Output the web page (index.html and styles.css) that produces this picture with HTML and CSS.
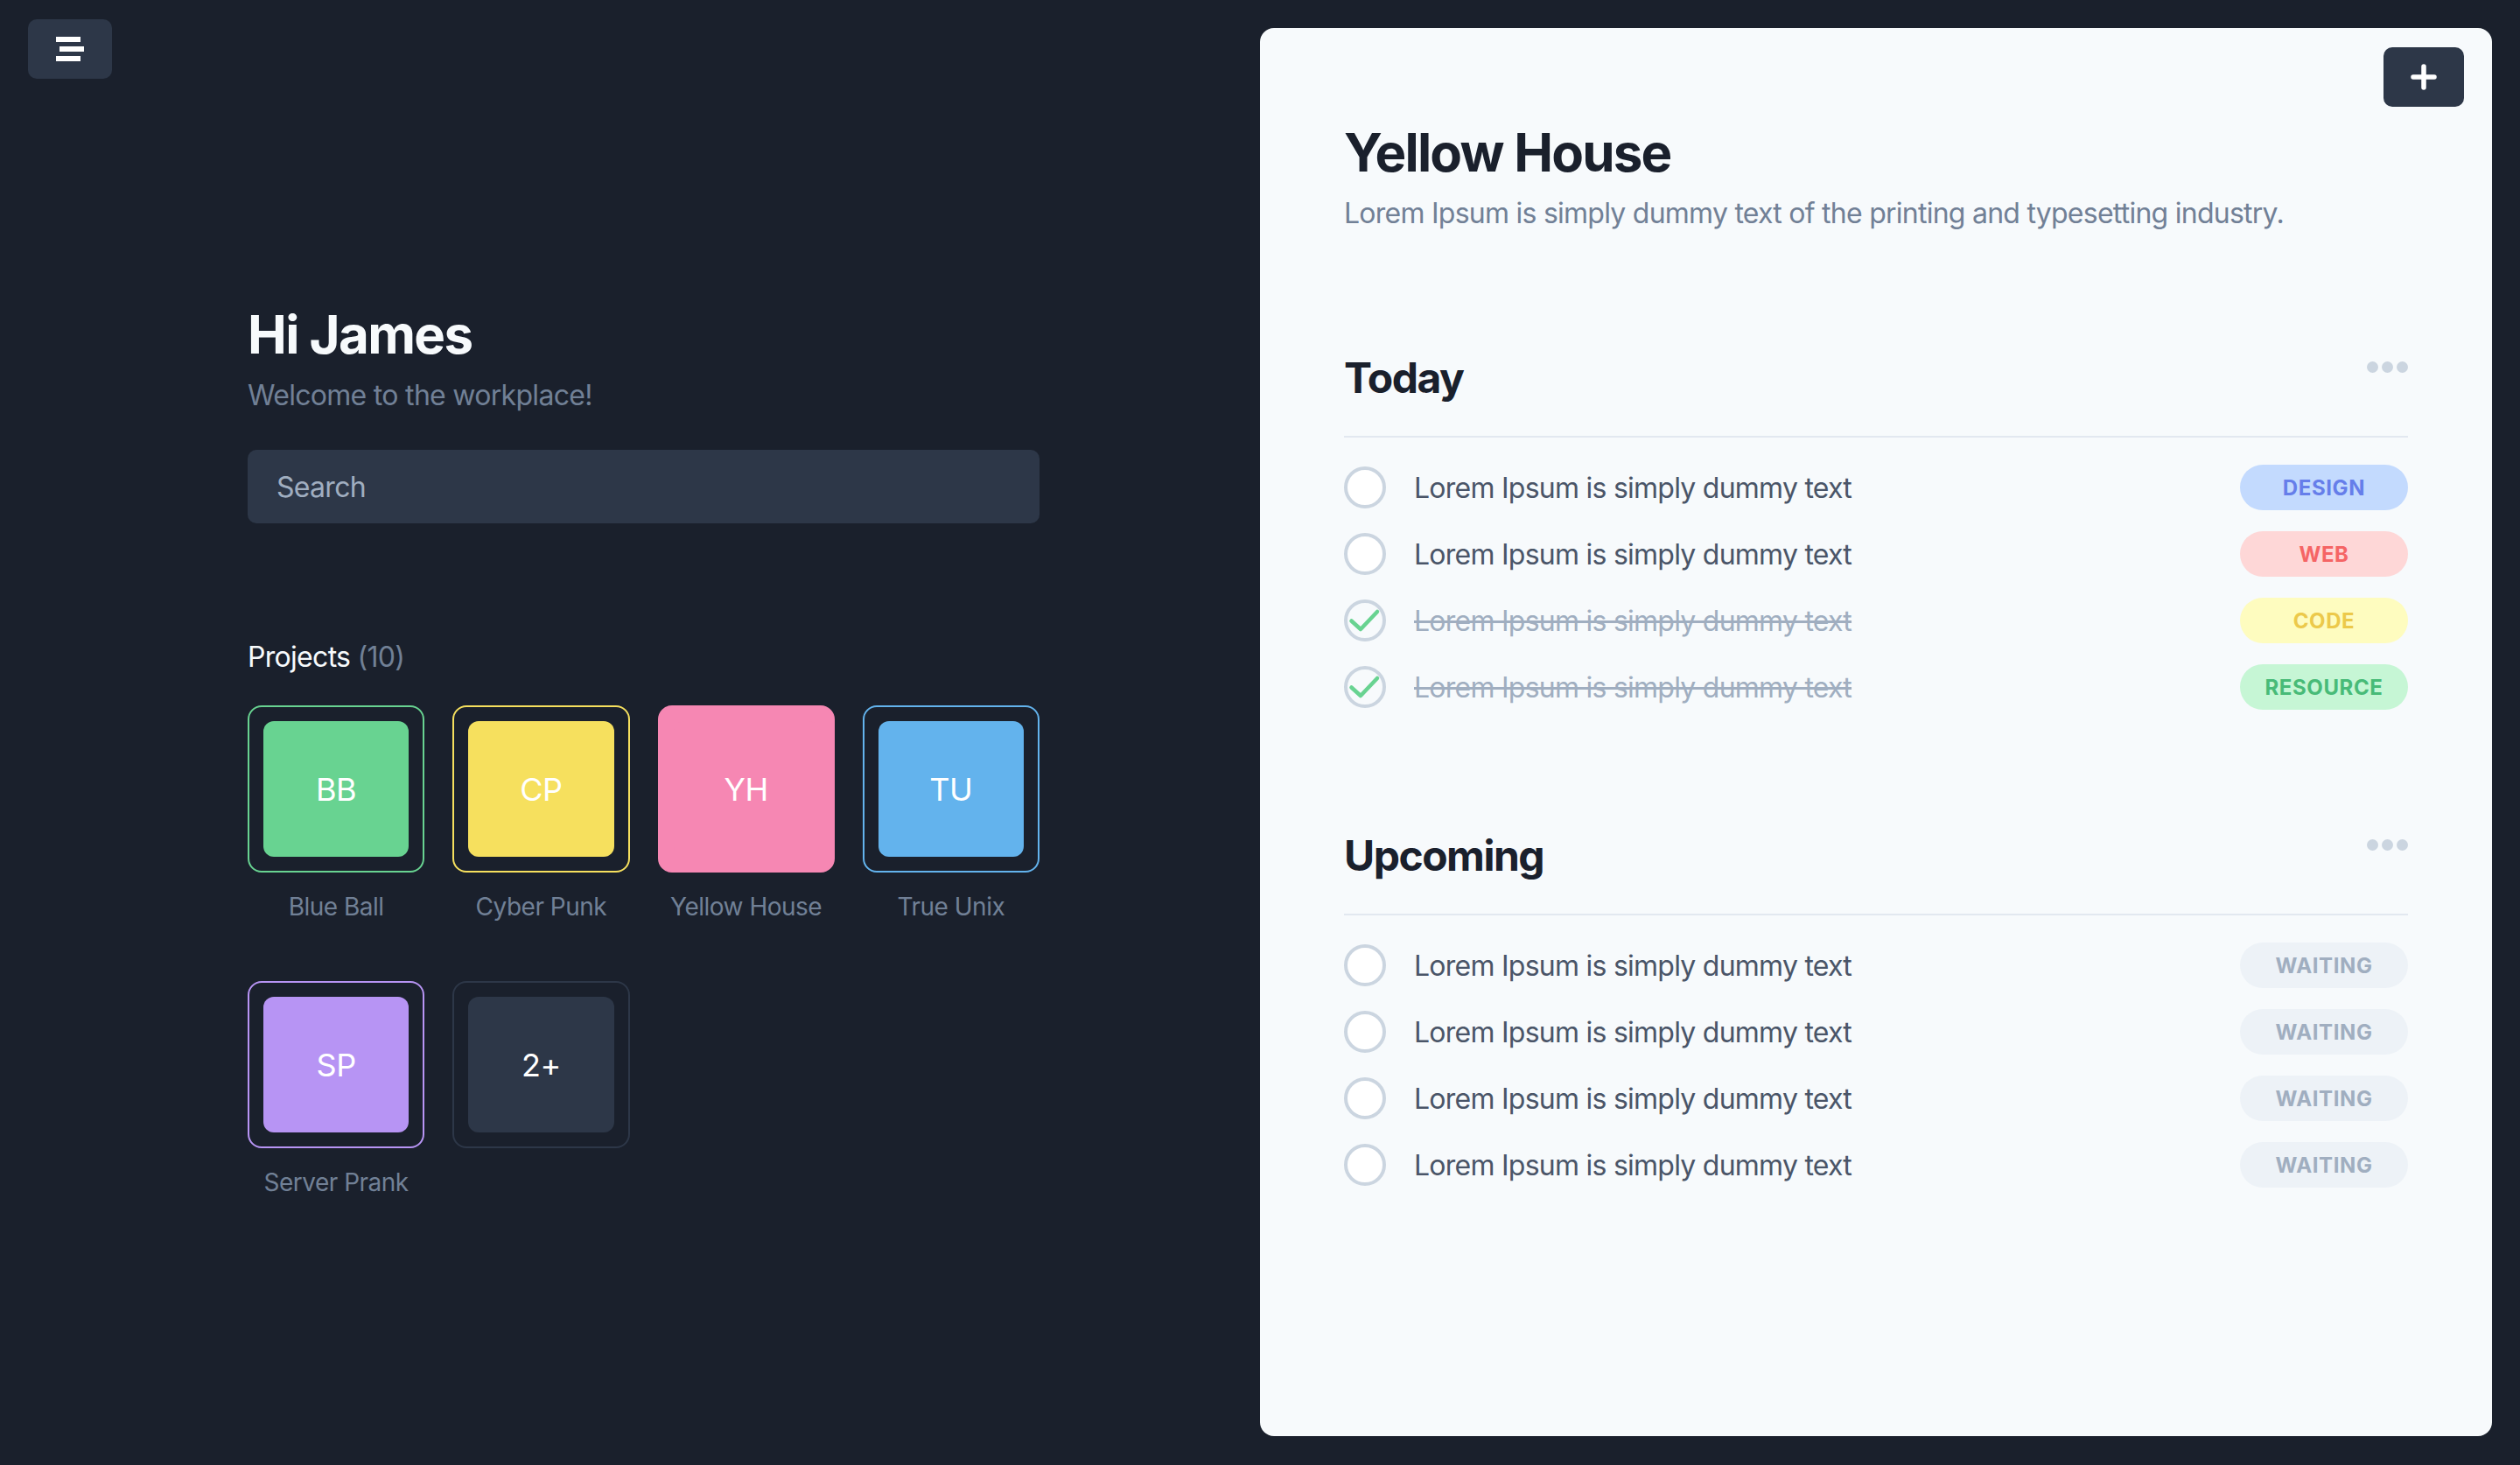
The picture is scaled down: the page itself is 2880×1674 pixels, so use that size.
FILE: index.html
```html
<!DOCTYPE html>
<html lang="en">
<head>
<meta charset="utf-8">
<title>Workplace</title>
<link rel="stylesheet" href="styles.css">
</head>
<body>
<div class="app">
  <aside class="sidebar">
    <button class="menu-btn" aria-label="Menu">
      <span class="bar"></span><span class="bar bar-mid"></span><span class="bar"></span>
    </button>
    <div class="intro">
      <h1 class="greeting">Hi James</h1>
      <p class="welcome">Welcome to the workplace!</p>
      <div class="search">Search</div>
      <h2 class="projects-title">Projects <span class="count">(10)</span></h2>
      <div class="projects">
        <div class="project">
          <div class="tile tile-green"><div class="tile-inner">BB</div></div>
          <div class="project-name">Blue Ball</div>
        </div>
        <div class="project">
          <div class="tile tile-yellow"><div class="tile-inner">CP</div></div>
          <div class="project-name">Cyber Punk</div>
        </div>
        <div class="project">
          <div class="tile tile-pink tile-active"><div class="tile-inner">YH</div></div>
          <div class="project-name">Yellow House</div>
        </div>
        <div class="project">
          <div class="tile tile-blue"><div class="tile-inner">TU</div></div>
          <div class="project-name">True Unix</div>
        </div>
        <div class="project">
          <div class="tile tile-purple"><div class="tile-inner">SP</div></div>
          <div class="project-name">Server Prank</div>
        </div>
        <div class="project">
          <div class="tile tile-more"><div class="tile-inner">2+</div></div>
        </div>
      </div>
    </div>
  </aside>

  <main class="panel">
    <button class="add-btn" aria-label="Add">
      <svg width="30" height="30" viewBox="0 0 30 30"><path d="M15 3v24M3 15h24" stroke="#fff" stroke-width="5.5" stroke-linecap="round" fill="none"/></svg>
    </button>
    <h1 class="panel-title">Yellow House</h1>
    <p class="panel-sub">Lorem Ipsum is simply dummy text of the printing and typesetting industry.</p>

    <section class="section section-today">
      <div class="section-head">
        <h2 class="section-title">Today</h2>
        <div class="dots"><span></span><span></span><span></span></div>
      </div>
      <ul class="tasks">
        <li class="task"><span class="check"></span><span class="task-text">Lorem Ipsum is simply dummy text</span><span class="tag tag-design">Design</span></li>
        <li class="task"><span class="check"></span><span class="task-text">Lorem Ipsum is simply dummy text</span><span class="tag tag-web">Web</span></li>
        <li class="task done"><span class="check"><svg width="48" height="48" viewBox="0 0 48 48"><path d="M8.5 24.5 L19 34 L38 14" stroke="#68d391" stroke-width="4.5" stroke-linecap="round" stroke-linejoin="round" fill="none"/></svg></span><span class="task-text">Lorem Ipsum is simply dummy text</span><span class="tag tag-code">Code</span></li>
        <li class="task done"><span class="check"><svg width="48" height="48" viewBox="0 0 48 48"><path d="M8.5 24.5 L19 34 L38 14" stroke="#68d391" stroke-width="4.5" stroke-linecap="round" stroke-linejoin="round" fill="none"/></svg></span><span class="task-text">Lorem Ipsum is simply dummy text</span><span class="tag tag-resource">Resource</span></li>
      </ul>
    </section>

    <section class="section section-upcoming">
      <div class="section-head">
        <h2 class="section-title">Upcoming</h2>
        <div class="dots"><span></span><span></span><span></span></div>
      </div>
      <ul class="tasks">
        <li class="task"><span class="check"></span><span class="task-text">Lorem Ipsum is simply dummy text</span><span class="tag tag-waiting">Waiting</span></li>
        <li class="task"><span class="check"></span><span class="task-text">Lorem Ipsum is simply dummy text</span><span class="tag tag-waiting">Waiting</span></li>
        <li class="task"><span class="check"></span><span class="task-text">Lorem Ipsum is simply dummy text</span><span class="tag tag-waiting">Waiting</span></li>
        <li class="task"><span class="check"></span><span class="task-text">Lorem Ipsum is simply dummy text</span><span class="tag tag-waiting">Waiting</span></li>
      </ul>
    </section>
  </main>
</div>
</body>
</html>
```

FILE: styles.css
```css
* { box-sizing: border-box; }

html, body {
  margin: 0;
  padding: 0;
}

body {
  background: #1a202c;
  font-family: "Inter", "Noto Sans", sans-serif;
  color: #f7fafc;
}

.app {
  display: flex;
  width: 2880px;
  height: 1674px;
}

/* ---------- Sidebar ---------- */
.sidebar {
  width: 1440px;
  flex: none;
  padding: 22px 0 0 32px;
}

.menu-btn {
  width: 96px;
  height: 68px;
  border: none;
  border-radius: 10px;
  background: #2d3748;
  padding: 20px 0 0 32px;
  display: flex;
  flex-direction: column;
  gap: 5px;
  cursor: pointer;
}

.bar {
  display: block;
  width: 28px;
  height: 6px;
  background: #ffffff;
}

.bar-mid { margin-left: 4px; }

.intro {
  margin: 256px 0 0 251px;
  width: 905px;
}

.greeting {
  margin: 0;
  font-size: 60px;
  line-height: 72px;
  font-weight: 700;
  letter-spacing: -1.6px;
  color: #f7fafc;
}

.welcome {
  margin: 10px 0 0;
  font-size: 32px;
  line-height: 48px;
  letter-spacing: -0.7px;
  color: #718096;
}

.search {
  margin-top: 38px;
  height: 84px;
  border-radius: 10px;
  background: #2d3748;
  padding: 0 33px;
  display: flex;
  align-items: center;
  font-size: 32px;
  letter-spacing: -0.7px;
  color: #a0aec0;
}

.projects-title {
  margin: 129px 0 0;
  font-size: 32px;
  line-height: 48px;
  font-weight: 400;
  letter-spacing: -0.7px;
  color: #f7fafc;
}

.count { color: #718096; }

.projects {
  margin-top: 31px;
  display: grid;
  grid-template-columns: repeat(4, 1fr);
  column-gap: 32px;
  row-gap: 64px;
}

.tile {
  height: 191px;
  border: 2px solid;
  border-radius: 16px;
  padding: 16px;
}

.tile-inner {
  height: 100%;
  border-radius: 12px;
  display: flex;
  align-items: center;
  justify-content: center;
  font-size: 36px;
  letter-spacing: -0.5px;
  color: #ffffff;
}

.tile-green { border-color: #68d391; }
.tile-green .tile-inner { background: #68d391; }
.tile-yellow { border-color: #f6e05e; }
.tile-yellow .tile-inner { background: #f6e05e; }
.tile-pink { border-color: #f687b3; }
.tile-pink .tile-inner { background: #f687b3; }
.tile-blue { border-color: #63b3ed; }
.tile-blue .tile-inner { background: #63b3ed; }
.tile-purple { border-color: #b794f4; }
.tile-purple .tile-inner { background: #b794f4; }
.tile-more { border-color: #2d3748; }
.tile-more .tile-inner { background: #2d3748; }
.tile-active { background: #f687b3; }

.project-name {
  margin-top: 18px;
  text-align: center;
  font-size: 28px;
  line-height: 42px;
  letter-spacing: -0.5px;
  color: #718096;
}

/* ---------- Panel ---------- */
.panel {
  position: relative;
  flex: 1;
  margin: 32px 32px 33px 0;
  background: #f7fafc;
  border-radius: 16px;
  padding: 106px 96px 0;
  color: #1a202c;
}

.add-btn {
  position: absolute;
  top: 22px;
  right: 32px;
  width: 92px;
  height: 68px;
  border: none;
  border-radius: 10px;
  background: #2d3748;
  display: flex;
  align-items: center;
  justify-content: center;
  padding: 0;
  cursor: pointer;
}

.panel-title {
  margin: 0;
  font-size: 60px;
  line-height: 72px;
  font-weight: 700;
  letter-spacing: -1.8px;
  color: #1a202c;
}

.panel-sub {
  margin: 12px 0 0;
  font-size: 32px;
  line-height: 44px;
  letter-spacing: -0.75px;
  color: #718096;
}

.section-today { margin-top: 136px; }
.section-upcoming { margin-top: 137px; }

.section-head {
  display: flex;
  justify-content: space-between;
  align-items: flex-start;
  padding-bottom: 36px;
  border-bottom: 2px solid #e2e8f0;
}

.section-title {
  margin: 0;
  font-size: 48px;
  line-height: 60px;
  font-weight: 700;
  letter-spacing: -1.5px;
  color: #1a202c;
}

.dots {
  display: flex;
  gap: 4px;
  margin-top: 11px;
}

.dots span {
  width: 13px;
  height: 13px;
  border-radius: 50%;
  background: #cbd5e0;
}

.tasks {
  list-style: none;
  margin: 0;
  padding: 31px 0 0;
  display: flex;
  flex-direction: column;
  gap: 24px;
}

.task {
  height: 52px;
  display: flex;
  align-items: center;
}

.check {
  width: 48px;
  height: 48px;
  flex: none;
  border-radius: 50%;
  border: 4px solid #cbd5e0;
  background: #ffffff;
  position: relative;
  margin-right: 32px;
}

.check svg {
  position: absolute;
  left: -4px;
  top: -4px;
}

.task-text {
  flex: 1;
  font-size: 32px;
  letter-spacing: -0.75px;
  color: #4a5568;
}

.done .task-text {
  color: #a0aec0;
  text-decoration: line-through;
}

.done .check { background: transparent; }

.tag {
  width: 192px;
  height: 52px;
  border-radius: 26px;
  display: flex;
  align-items: center;
  justify-content: center;
  font-size: 24px;
  font-weight: 700;
  text-transform: uppercase;
  letter-spacing: 0.6px;
}

.tag-design { background: #c3dafe; color: #667eea; }
.tag-web { background: #fed7d7; color: #f56565; }
.tag-code { background: #fefcbf; color: #ecc94b; }
.tag-resource { background: #c6f6d5; color: #48bb78; }
.tag-waiting { background: #edf2f7; color: #a0aec0; }
```
